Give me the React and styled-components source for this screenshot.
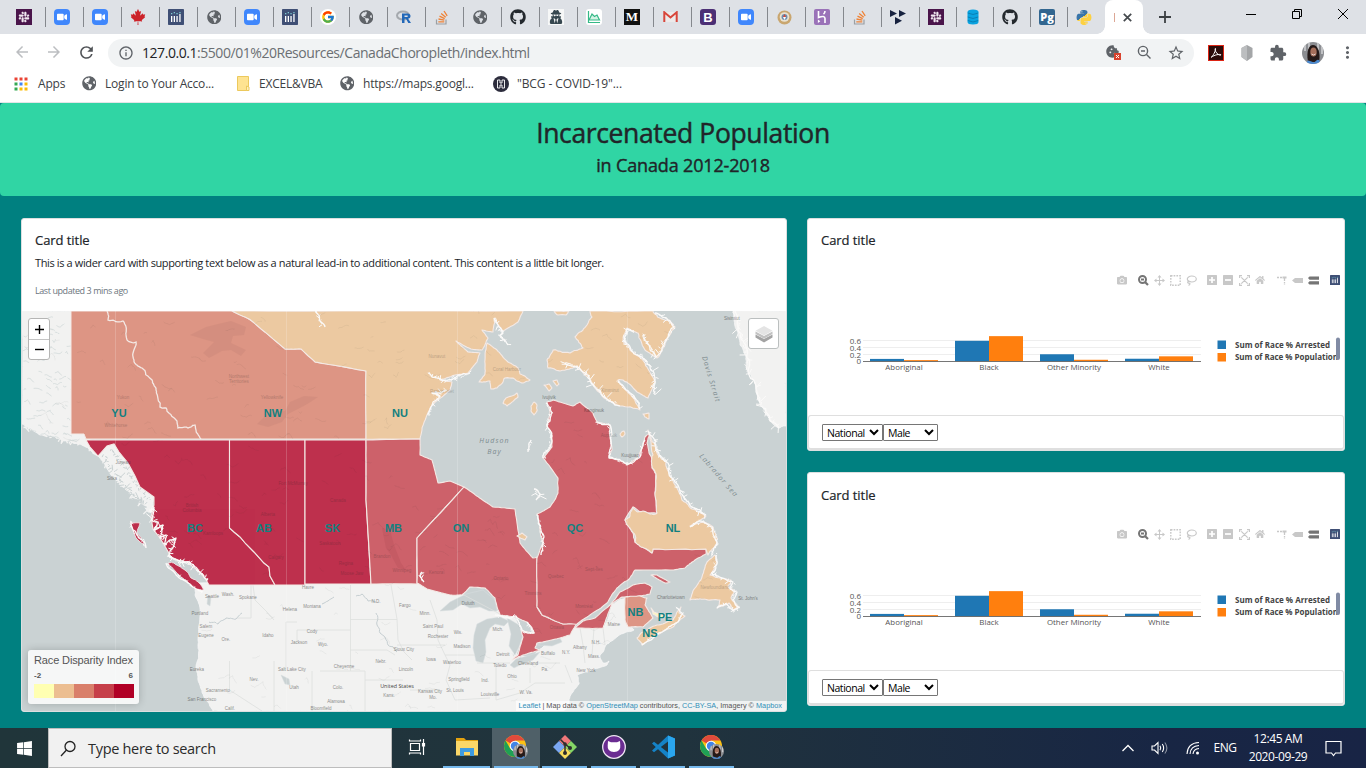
import React from "react";
import styled, { createGlobalStyle } from "styled-components";
import {
  FaSlack, FaGithub, FaCanadianMapleLeaf, FaGlobeAmericas, FaVideo,
  FaUserSecret, FaPython, FaWindows, FaHome, FaCamera,
} from "react-icons/fa";
import { FcGoogle } from "react-icons/fc";
import {
  MdArrowBack, MdArrowForward, MdRefresh, MdInfoOutline, MdStarBorder, MdMoreVert,
  MdExtension, MdCookie,
} from "react-icons/md";

const ui = `"Open Sans", "Noto Sans", sans-serif`;

const Global = createGlobalStyle`
  *, *::before, *::after { box-sizing: border-box; }
  html, body { margin: 0; padding: 0; }
  body { background: #008080; font-family: ${ui}; color: #212529; overflow: hidden; }
  svg { display: block; }
`;

const Screen = styled.div`
  width: 1366px;
  height: 768px;
  display: flex;
  flex-direction: column;
  overflow: hidden;
`;

/* ---------- browser chrome ---------- */

const TabStrip = styled.div`
  height: 34px;
  flex: none;
  display: flex;
  background: #dee1e6;
  padding-left: 8px;
`;

const Tab = styled.div`
  width: ${(p) => p.$w}px;
  height: 34px;
  flex: none;
  display: flex;
  align-items: center;
  padding-left: 8px;
  background: ${(p) => (p.$last ? "none" : "linear-gradient(#85888d, #85888d) right 7px / 1px 20px no-repeat")};
`;

const Favicon = styled.span`
  width: 16px;
  height: 16px;
  flex: none;
  display: flex;
  align-items: center;
  justify-content: center;
  overflow: hidden;
  border-radius: ${(p) => p.$r || 0}px;
  background: ${(p) => p.$bg || "transparent"};
  color: ${(p) => p.$fg || "#5f6368"};
  font: ${(p) => p.$font || `700 11px ${ui}`};
`;

const ActiveTab = styled.div`
  width: 38px;
  flex: none;
  display: flex;
  align-items: center;
  padding-left: 9px;
  gap: 8px;
  background: #fff;
  border-radius: 8px 8px 0 0;
  position: relative;
  &::before, &::after {
    content: "";
    position: absolute;
    bottom: 0;
    width: 8px;
    height: 8px;
  }
  &::before { left: -8px; background: radial-gradient(circle at 0 0, transparent 7.5px, #fff 8px); }
  &::after { right: -8px; background: radial-gradient(circle at 100% 0, transparent 7.5px, #fff 8px); }
`;

const FavSliver = styled.span`
  width: 1px;
  height: 9px;
  background: #dca795;
`;

const NewTab = styled.div`
  padding: 11px 0 0 16px;
`;

const WindowButtons = styled.div`
  margin-left: auto;
  display: flex;
  height: 28px;
  align-items: center;
  gap: 34px;
  padding-right: 17px;
`;

const Toolbar = styled.div`
  height: 35px;
  flex: none;
  display: flex;
  align-items: center;
  background: #fff;
  padding: 2px 12px 0 13px;
  color: #5f6368;
`;

const NavIcons = styled.div`
  display: flex;
  flex: none;
  gap: 14px;
  width: 95px;
  color: #bcbec1;
`;

const Omnibox = styled.div`
  width: 1086px;
  flex: none;
  height: 28px;
  border-radius: 14px;
  background: #f1f3f4;
  display: flex;
  align-items: center;
  padding: 0 9px 0 10px;
  gap: 8px;
`;

const Url = styled.span`
  font-size: 14px;
  letter-spacing: -0.45px;
  color: #6b6f73;
  flex: 1;
  line-height: 20px;
  b { font-weight: 400; color: #202124; }
`;

const OmniIcons = styled.div`
  display: flex;
  align-items: center;
  gap: 15px;
`;

const Extensions = styled.div`
  display: flex;
  align-items: center;
  flex: none;
  padding-left: 14px;
  gap: 14.5px;
`;

const Bookmarks = styled.div`
  height: 34px;
  flex: none;
  background: #fff;
  border-bottom: 1px solid #e3e5e8;
  display: flex;
  align-items: center;
  padding: 0 0 4px 14px;
`;

const Bookmark = styled.div`
  display: flex;
  align-items: center;
  width: ${(p) => p.$w}px;
  gap: ${(p) => p.$gap || 8}px;
  font-size: 12px;
  letter-spacing: ${(p) => p.$ls || -0.2}px;
  color: #3c4043;
  white-space: nowrap;
`;

/* ---------- page ---------- */

const Page = styled.main`
  flex: 1;
  background: #008080;
  overflow: hidden;
`;

const Jumbotron = styled.header`
  height: 93px;
  background: #30d5a4;
  border-radius: 4px;
  text-align: center;
  padding-top: 13px;
`;

const Heading = styled.h1`
  margin: 0;
  font-size: 26.5px;
  font-weight: 500;
  line-height: 34px;
  letter-spacing: -0.36px;
  -webkit-text-stroke: 0.45px currentColor;
`;

const SubHeading = styled.h2`
  margin: 0;
  font-size: 18px;
  font-weight: 500;
  line-height: 28px;
  letter-spacing: -0.15px;
  padding-top: 1px;
  -webkit-text-stroke: 0.4px currentColor;
`;

const Deck = styled.div`
  display: flex;
  align-items: flex-start;
  gap: 20px;
  padding: 22px 21px 0;
`;

const SideColumn = styled.div`
  display: flex;
  flex-direction: column;
  gap: 21px;
`;

const Card = styled.section`
  width: ${(p) => p.$w}px;
  height: ${(p) => p.$h}px;
  display: flex;
  flex-direction: column;
  background: #fff;
  border: 1px solid #dcdfe0;
  border-radius: 3px;
  overflow: hidden;
`;

const CardBody = styled.div`
  height: ${(p) => p.$h}px;
  flex: none;
  padding: ${(p) => p.$top || 12}px 13px 0;
`;

const CardTitle = styled.h5`
  margin: 0;
  font-size: 13px;
  font-weight: 500;
  line-height: 18px;
  letter-spacing: -0.06px;
  -webkit-text-stroke: 0.2px currentColor;
`;

const CardText = styled.p`
  margin: 0;
  font-size: 11px;
  line-height: 16px;
  padding-top: 6px;
  letter-spacing: -0.375px;
  white-space: nowrap;
`;

const Updated = styled.small`
  display: block;
  padding-top: 14px;
  font-size: 9px;
  line-height: 12px;
  color: #6c757d;
  letter-spacing: -0.43px;
`;

const CardFooter = styled.footer`
  height: 35px;
  margin-top: auto;
  flex: none;
  border: 1px solid #dfdfdf;
  border-radius: 3px;
  border-bottom-width: 2px;
  display: flex;
  align-items: center;
  padding: 1px 0 0 13px;
`;

const Select = styled.select`
  width: ${(p) => p.$w}px;
  height: 17px;
  padding: 0;
  margin: 0;
  border: 1px solid #767676;
  border-radius: 1px;
  background-color: #fff;
  color: #000;
  font: 10.5px ${ui};
  letter-spacing: -0.45px;
`;

/* ---------- map ---------- */

const MapPane = styled.div`
  position: relative;
  flex: 1;
  overflow: hidden;
  background: #cad2d3;
`;

const ZoomControl = styled.div`
  position: absolute;
  left: 6px;
  top: 7px;
  width: 22px;
  border: 1px solid #b5b5b4;
  border-radius: 3px;
  background: #fff;
`;

const ZoomButton = styled.div`
  height: 20px;
  display: flex;
  align-items: center;
  justify-content: center;
  & + & { border-top: 1px solid #c4c4c4; }
`;

const LayersControl = styled.div`
  position: absolute;
  left: 726px;
  top: 7px;
  width: 31px;
  height: 31px;
  border: 1px solid #bbbfbf;
  border-radius: 3px;
  background: #fff;
  display: flex;
  align-items: center;
  justify-content: center;
`;

const Legend = styled.div`
  position: absolute;
  left: 6px;
  bottom: 7px;
  width: 111px;
  height: 54px;
  padding: 4px 5px 0 6px;
  border-radius: 3px;
  background: rgba(255, 255, 255, 0.82);
  box-shadow: 0 0 8px rgba(0, 0, 0, 0.2);
  color: #555;
  font-family: "Liberation Sans", Arial, sans-serif;
`;

const LegendTitle = styled.div`
  font-size: 11px;
  line-height: 13px;
  white-space: nowrap;
  letter-spacing: -0.13px;
`;

const LegendRange = styled.div`
  display: flex;
  justify-content: space-between;
  font-size: 8px;
  font-weight: 700;
  line-height: 10px;
  padding: 4px 1px 0 0;
  height: 17px;
`;

const LegendBar = styled.div`
  display: flex;
`;

const Swatch = styled.span`
  height: 14px;
  flex: 1;
  background: ${(p) => p.$c};
`;

const Attribution = styled.div`
  position: absolute;
  right: 0;
  bottom: 0;
  height: 10px;
  padding: 0 4px 0 3px;
  background: rgba(255, 255, 255, 0.7);
  color: #555;
  font: 7.3px/10px "Liberation Sans", Arial, sans-serif;
  white-space: nowrap;
  a { color: #2f8fb8; }
`;

function generator(seed) {
  let s = seed;
  return () => {
    s = (s * 16807) % 2147483647;
    return s / 2147483647;
  };
}

/* deterministic midpoint displacement for coastlines */
function rough(pts, amp, seed = 7, closed = true) {
  const rnd = generator(seed * 7919);
  let list = pts;
  for (let d = 0, a = amp; d < 3; d++, a *= 0.62) {
    const out = [];
    for (let i = 0; i < list.length; i++) {
      const p = list[i];
      out.push(p);
      if (i === list.length - 1 && !closed) break;
      const q = list[(i + 1) % list.length];
      const len = Math.hypot(q[0] - p[0], q[1] - p[1]);
      if (len > 2.4) {
        const k = Math.min(a, len * 0.3);
        out.push([(p[0] + q[0]) / 2 + (rnd() - 0.5) * k, (p[1] + q[1]) / 2 + (rnd() - 0.5) * k]);
      }
    }
    list = out;
  }
  return "M" + list.map((p) => p[0].toFixed(1) + " " + p[1].toFixed(1)).join("L") + (closed ? "Z" : "");
}

/* short random inlets scattered along a shoreline */
function inlets(pts, reach, seed) {
  const rnd = generator(seed * 104729);
  let d = "";
  for (let i = 0; i < pts.length - 1; i++) {
    const [x0, y0] = pts[i];
    const [x1, y1] = pts[i + 1];
    const n = Math.ceil(Math.hypot(x1 - x0, y1 - y0) / 1.5);
    for (let k = 0; k < n; k++) {
      const x = x0 + ((x1 - x0) * k) / n + (rnd() - 0.5) * 2;
      const y = y0 + ((y1 - y0) * k) / n + (rnd() - 0.5) * 2;
      const r = reach * rnd();
      d += `M${x.toFixed(1)} ${y.toFixed(1)}l${((rnd() - 0.5) * 2 * r).toFixed(1)} ${((rnd() - 0.5) * 2 * r).toFixed(1)}`;
    }
  }
  return d;
}
const P = (str) => str.trim().split(/\s+/).map((c) => c.split(",").map(Number));

const C = { nw: "#dd9584", nu: "#ecc9a1", bc: "#be304d", qc: "#cd616a" };
const EDGE = "#f4e9e5";

const land = [
  "22,311 71,311 71,434 84,434 90,440 113,443 128,464 140,487 154,497 152,512 148,512 144,505 138,500 134,494 126,490 120,484 114,478 108,470 103,462 98,456 90,450 80,444 70,441 60,439 50,435 40,435 30,428 22,424",
  "196,583 417,583 430,588 450,595 462,595 500,612 515,618 523,634 516,655 530,658 545,645 575,628 604,628 612,604 628,597 628,627 634,630 618,636 606,645 600,655 603,663 609,661 607,665 590,671 577,675 579,684 573,692 568,705 563,711 213,711 204,697 198,680 196,668 199,650 198,640 200,612 195,595",
  "733,311 735,326 740,345 746,357 747,370 754,380 758,400 765,408 769,420 778,428 786,426 786,311",
];

const area = (pts, fill, amp, seed) => ({ pts: P(pts), fill, amp, seed });
const provinces = [
  area("232,311 247,318 253,322 285,349 301,349 315,362 333,365 366,371 366,439 420,439 422,428 427,415 432,405 442,397 450,390 452,382 440,380 455,375 468,373 477,362 480,353 468,352 456,341 471,349 482,350 488,338 482,330 493,332 495,320 503,331 508,328 518,322 523,311", C.nu, 0.7, 3),
  area("487,343 497,350 508,362 518,368 520,374 530,380 523,383 513,378 505,378 503,382 497,388 491,389 490,381 479,382 485,374 485,360", C.nu, 1.6, 5),
  area("506,398 517,393 518,397 507,406 503,403", C.nu, 1.4, 9),
  area("534,402 537,405 537,411 534,415 531,411 531,406", C.nu, 1, 11),
  area("544,385 549,384 552,388 549,391", C.nu, 1, 12),
  area("553,381 557,380 559,384 557,386", C.nu, 1, 13),
  area("554,311 569,311 566,315 558,315", C.nu, 1, 15),
  area("620,434 624,431 625,434 622,437", C.nu, 1, 17),
  area("643,414 649,413 649,419 645,417", C.nu, 1, 18),
  area("590,311 592,317 587,325 575,337 583,348 570,353 553,350 547,360 548,368 560,371 577,366 590,380 603,397 620,406 640,410 635,400 618,380 623,380 637,392 648,398 655,382 645,363 630,350 623,340 627,328 638,333 645,350 657,358 665,345 668,337 675,327 668,320 660,318 653,311", C.nu, 2.6, 21),
  area("366,440 420,439 420,455 432,460 438,483 450,481 464,487 417,538 417,584 371,584 366,500", C.qc, 0.35, 25),
  area("464,487 473,493 484,501 493,507 515,509 517,523 520,543 533,558 537,557 537,607 542,615 553,620 563,624 577,623 570,635 560,638 537,643 535,648 540,650 523,655 512,660 518,655 523,637 521,630 528,632 534,633 527,622 515,617 500,615 497,607 495,598 485,588 470,587 462,595 450,595 427,589 417,583 417,538", C.qc, 0.7, 27),
  area("547,402 553,400 573,406 580,402 593,413 597,422 610,425 610,437 612,450 609,458 620,460 627,465 638,458 642,448 645,437 650,433 647,443 649,453 653,462 652,468 656,474 655,493 657,513 643,513 633,507 625,520 633,533 635,542 652,553 653,549 706,549 706,554 695,560 685,568 670,570 635,570 628,580 617,588 607,603 590,615 577,624 563,624 553,620 542,615 537,607 537,558 543,543 540,530 537,514 550,507 558,493 558,478 543,458 552,447 552,433 547,427 550,413", C.qc, 1, 29),
  area("575,628 583,621 595,618 610,605 620,592 633,585 645,583 652,587 650,594 633,597 622,597 612,604 607,617 603,628", C.qc, 0.8, 31),
  area("651,575 657,575 670,582 665,583", C.qc, 0.8, 33),
  area("648,430 655,445 658,455 666,462 670,476 678,490 682,500 692,509 706,516 696,523 690,526 704,522 713,527 717,543 708,555 706,549 653,549 652,553 644,548 635,542 635,535 629,527 625,520 630,516 633,507 638,512 643,511 650,514 657,513 655,493 656,474 652,466 653,455", C.nu, 2.4, 35),
  area("715,555 717,563 710,575 720,578 731,580 728,586 735,591 731,598 738,606 733,610 729,603 717,608 720,600 703,599 690,600 695,588 702,577 707,562", C.nu, 1.8, 37),
  area("625,597 640,596 647,598 645,605 653,618 643,627 628,627 625,620", C.nw, 1, 39),
  area("681,607 679,613 685,616 678,622 673,627 657,635 650,638 642,645 637,638 643,632 657,625 665,623 673,620 677,612", C.nu, 1.4, 41),
  area("651,608 654,612 661,615 669,615 660,618 653,614", "#fbf8c0", 0.7, 43),
  area("517,536 522,533 527,537 525,540", C.nu, 0.8, 44),
];

const west = [
  "M86 440H229.500V528L234 532L240 537L246 544L254 552L264 563L269 567L270 576L275 585H209L205 578L196 569L187 562L178 560L171 557L166 548L160 538L153 529L151 517L154 505V497L140 487L135 476L128 463L119 452L114 444L107 446L98 456L90 447Z",
  "M229.500 440H305V585H275L270 576L269 567L264 563L254 552L246 544L240 537L234 532L229.500 528Z",
  "M305 440H366V500L371 584H305Z",
];

const yukon = "107,311 108,320 123,321 127,340 136,342 134,360 142,368 152,380 156,390 160,407 166,408 177,421 178,428 188,428 195,425 196,430 201,439";

const fiords = [
  ["150,512 154,508 152,520 158,522 154,530 163,525 160,538 166,535 165,545 176,538 171,550 168,556 180,562 192,564 200,572 208,580", 7, 51],
  ["131,521 133,530 138,536 142,540 146,548", 3, 53],
  ["166,563 175,573 188,583 203,592", 3, 57],
  ["648,431 656,446 660,456 668,463 672,478 680,491 686,500 694,508 706,515", 6.5, 59],
  ["690,527 697,522 704,522 712,527 717,543 712,555", 4, 61],
  ["565,363 577,367 585,373 590,380 596,388 603,396 612,402 620,406", 7.5, 63],
  ["618,381 626,390 635,398 640,409", 3.5, 65],
  ["655,395 654,386 655,378 650,366 642,357 631,350 624,341 627,329 634,331", 6.5, 67],
  ["643,335 649,345 656,357 662,348 668,337 674,327 668,320 655,313", 6, 69],
  ["428,373 437,378 446,381 455,378 470,373", 4, 71],
  ["428,415 433,402 440,396 432,393 447,390", 4, 73],
  ["494,318 498,325 503,333 500,336 508,345", 5, 75],
  ["316,311 319,316 321,322 325,327", 5, 77],
  ["534,489 540,494 536,500", 7, 79],
  ["531,440 529,446 528,452", 2, 81],
  ["538,515 541,530 543,543 541,555", 3.5, 83],
  ["422,572 420,576 424,582", 6, 85],
  ["495,615 510,618 516,616 522,630 528,633 534,633 527,622", 3, 87],
  ["716,555 717,564 712,574 722,578 733,582 729,588 737,592 733,600 739,607 733,611 726,604 717,608", 4, 89],
  ["677,608 683,614 678,622 668,628 656,635 642,645", 2, 91],
  ["735,311 738,330 746,347 748,372 756,388 760,403 770,420 779,428", 7, 93],
  ["546,403 552,413 547,426 552,436 549,449 543,458", 3.5, 95],
  ["597,422 610,425 611,440 609,457 627,464 640,457 645,440", 3, 97],
];

const panhandle = ["86,443 98,454 108,466 118,478 128,490 140,502 150,508", "112,450 122,462 132,478 142,492 152,500", "104,455 112,470 124,484 136,498 146,506"];

const waters = [
  "M440 611L450 602L466 594L483 590L495 600L497 611L489 611L480 607L470 608L462 604L453 610Z",
  "M477 624L487 619L500 617L509 621L504 626L495 624L490 628L485 640L486 652L483 663L476 661L473 648L474 635Z",
  "M507 618L519 625L523 635L519 647L515 655L509 646L511 634Z",
  "M510 665L516 659L527 656L540 652L533 660L522 664L514 668Z",
  "M536 645L548 641L560 638L562 642L552 646Z",
  "M208 595L211 597L210 606L207 604Z M281 675L289 679L290 685L285 684Z",
];

const rivers = [
  ["209,622 218,624 226,618 236,619 242,613", 2, 8], ["322,604 328,601 334,597", 3, 10],
  ["356,596 362,594 368,601 376,602", 3, 12], ["376,613 377,625 380,633 388,645 397,652", 4, 14],
];

const stateLines = [
  "M350.500 585V671M286 671V622H297M297 630V641M297 630H350.500M251 618V585M251 618H237M320 671H365M350.500 619.500H397M350.500 650H387L395 655M365 671V711M365 680H403",
  "M229.500 661V690L262 711M274 661V711M312 671V711M391 585L397 619L398 640L404 652L412 660M397 645H445M410 690H440M430 600L437 620L438 640L445 655L450 665L446 680L455 700",
  "M477 663H510M496 663V700M496 700L520 693L535 683H565M445 655L475 655M455 700L490 698M530 668V683M536 663H560M580 628L583 645L585 663M594 628L592 655M603 628L605 645M565 665L572 683M253 585L255 600L267 612L274 620M462 594L500 614",
];

const mapText = [
  [212, 598, "Seattle"], [228, 596, "Wash."], [248, 599, "Spokane"], [200, 615, "Portland"], [206, 628, "Salem"], [206, 637, "Eugene"],
  [226, 641, "Ore."], [268, 637, "Idaho"], [290, 611, "Helena"], [312, 608, "Montana"], [308, 589, "Havre"], [312, 633, "Cody"],
  [299, 644, "Jackson"], [323, 646, "Wyo."], [344, 668, "Cheyenne"], [292, 671, "Salt Lake City"], [197, 671, "Eureka"],
  [254, 681, "Nev."], [294, 689, "Utah"], [338, 689, "Colo."], [218, 692, "Sacramento"], [202, 701, "San Francisco"], [336, 703, "Alamosa"],
  [230, 710, "Calif."], [321, 710, "Bloomfield"], [376, 603, "N.D."], [381, 663, "Nebr."], [389, 697, "Kans."],
  [405, 607, "Fargo"], [425, 615, "Minn."], [433, 628, "Saint Paul"], [438, 638, "Rochester"], [458, 634, "Wis."], [462, 648, "Madison"],
  [468, 605, "Duluth"], [431, 661, "Iowa"], [404, 651, "Sioux City"], [406, 671, "Lincoln"], [452, 664, "Waterloo"], [459, 681, "Springfield"],
  [430, 693, "Kansas City"], [455, 692, "St. Louis"], [433, 699, "Mo."], [485, 682, "Ind."], [490, 696, "Louisville"], [503, 656, "Detroit"],
  [500, 667, "Toledo"], [528, 665, "Cleveland"], [498, 631, "Mich."], [512, 678, "Ohio"], [526, 694, "W. Va."], [545, 671, "Pa."],
  [548, 655, "Buffalo"], [566, 654, "N.Y."], [580, 649, "Albany"], [594, 658, "Mass."], [596, 644, "N.H."], [614, 626, "Maine"],
  [586, 672, "New York"], [671, 599, "Charlottetown"], [748, 600, "St. John's"], [549, 399, "Ivujivik"], [732, 320, "Sisimiut"],
  [123, 464, "Juneau"], [112, 480, "Sitka"], [594, 412, "Kangirsuk"], [630, 457, "Kuujjuaq"],
];

const provinceText = [
  [123, 399, "Yukon"], [116, 427, "Whitehorse"], [239, 378, "Northwest"], [239, 383, "Territories"], [272, 399, "Yellowknife"],
  [192, 507, "British"], [192, 512, "Columbia"], [213, 535, "Kamloops"], [268, 516, "Alberta"], [276, 559, "Calgary"],
  [293, 485, "Fort McMurray"], [338, 502, "Canada"], [330, 545, "Saskatoon"], [346, 565, "Regina"], [352, 575, "Moose Jaw"], [382, 558, "Brandon"],
  [533, 595, "Timmins"], [501, 580, "Ontario"], [556, 578, "Quebec"], [557, 629, "Ottawa"], [584, 608, "Montréal"], [594, 571, "Sept-Îles"],
  [437, 358, "Nunavut"], [507, 371, "Coral Harbour"], [442, 393, "Rankin Inlet"], [609, 437, "Aupaluk"], [715, 589, "Newfoundland"],
  [436, 574, "Kenora"], [402, 572, "Winnipeg"], [610, 392, "Kimmirut"],
];

const labels = [
  ["YU", 119, 417], ["NW", 273, 417], ["NU", 400, 417], ["BC", 195, 532], ["AB", 264, 532], ["SK", 332.5, 532], ["MB", 393.5, 532],
  ["ON", 461, 532], ["QC", 575, 532], ["NL", 673, 532], ["NB", 635.5, 616], ["PE", 665, 621], ["NS", 650, 637],
];

function terrain(count, reach, x0, y0, w0, h0, seed) {
  const r = generator(seed * 31337);
  const out = [];
  for (let i = 0; i < count; i++) {
    const x = x0 + r() * w0;
    const y = y0 + r() * h0;
    const w = reach * (0.3 + r());
    const pts = [[x, y], [x + w * 0.5, y + (r() - 0.5) * reach * 0.7], [x + w, y + (r() - 0.4) * reach]];
    out.push(rough(pts, 3, 100 + i, false));
  }
  return out.join("");
}

function ChoroplethMap() {
  return (
    <svg width="764" height="401" viewBox="22 311 764 401">
      <defs>
        <clipPath id="land">
          {land.map((l, i) => <path key={i} d={rough(P(l), 1.5, 200 + i)} />)}
          {provinces.map((p, i) => <path key={i} d={rough(p.pts, p.amp, p.seed)} />)}
          {west.map((d, i) => <path key={i} d={d} />)}
          <path d="M71 311H232L247 318L285 349L366 371V439H86L71 434Z" />
        </clipPath>
        <clipPath id="alaska"><path d={rough(P(land[0]), 1.5, 200)} /></clipPath>
      </defs>
      {land.map((l, i) => (
        <path key={i} d={rough(P(l), 2.2, 200 + i)} fill="#f2f2f1" stroke="#f8f8f7" strokeWidth="0.8" />
      ))}
      <g fill="none" stroke="#f3f3f2" strokeWidth="1.3">
        {panhandle.map((p, i) => <path key={i} d={inlets(P(p), 8, 5 + i)} />)}
      </g>
      <path d={inlets(P(panhandle[2]), 8, 21) + inlets(P(panhandle[1]), 5, 22) + inlets(P("122,488 130,492 138,500 147,508"), 7, 23)} fill="none" stroke="#cad2d3" />
      <path d={inlets(P("22,424 32,429 42,434 55,438 70,441 82,444"), 6, 31)} stroke="#f2f2f1" strokeWidth="1.4" />
      <g clipPath="url(#alaska)" fill="none" stroke="#d3dadb" strokeWidth="0.8">
        <path d={terrain(70, 7, 22, 318, 52, 122, 4)} />
      </g>
      {waters.map((d, i) => <path key={i} d={d} fill="#cad2d3" stroke="#d9dfe0" strokeWidth="0.5" />)}
      <g fill="none" stroke="#dddfde" strokeWidth="0.8">
        {stateLines.map((d, i) => <path key={i} d={d} />)}
      </g>
      <path d={rivers.map(([p, a, s]) => rough(P(p), a, s, false)).join("")} fill="none" stroke="#c5ced1" />
      <path d="M71 311H232L247 318L253 322L285 349H301L315 362L333 365L366 371V439H86L84 434H71Z" fill={C.nw} stroke={EDGE} />
      <path d={rough(P(yukon), 5, 15, false)} fill="none" stroke={EDGE} strokeWidth="1.3" />
      <path d="M190 335L206 327L218 324L231 321L246 327L244 335L233 336L231 343L246 350L241 356L231 350L222 351L209 358L203 353L214 342L203 339Z" fill="#cf8b7c" opacity="0.6" />
      <path d="M257 424L268 413L285 411L290 402L304 396L318 397L309 403L300 408L288 414L282 422L268 427Z" fill="#cf8b7c" opacity="0.6" />
      {west.map((d, i) => <path key={i} d={d} fill={C.bc} stroke={EDGE} strokeWidth="1.100" />)}
      {provinces.map((p, i) => (
        <path key={i} d={rough(p.pts, p.amp, p.seed)} fill={p.fill} stroke={EDGE} strokeWidth="1.100" strokeLinejoin="round" />
      ))}
      <path d="M382 528L390 530L394 545L401 563L406 570L398 568L391 555L386 548Z" fill="#bf5661" opacity="0.6" />
      <g fill={C.bc} stroke="#f8eeee" strokeWidth="0.8">
        <path d={rough(P("168,563 174,563 185,570 191,578 199,583 204,590 195,589 186,580 176,572"), 1.6, 14)} />
        <path d={rough(P("130,523 140,523 137,533 146,547 136,538"), 1.6, 16)} />
      </g>
      <g fill="none" stroke="#fbfaf9" strokeLinejoin="round">
        {fiords.map(([p, a, s]) => (
          <g key={s}>
            <path d={rough(P(p), a, s, false)} strokeWidth="1.300" />
            <path d={inlets(P(p), a, s)} />
          </g>
        ))}
      </g>
      <g clipPath="url(#land)" fill="none" stroke="#2b3c40" opacity="0.065" strokeWidth="0.8">
        <path d={terrain(420, 9, 24, 311, 700, 400, 9)} />
      </g>
      <path d="M115.500 311V711M286.500 311V711M457.500 311V711M627.500 311V711" stroke="#fff" opacity="0.18" />
      <g fontFamily="Liberation Sans, Arial, sans-serif" fontSize="4.500" fill="#222" textAnchor="middle">
        <g opacity="0.5">{mapText.map(([x, y, t]) => <text key={t} x={x} y={y}>{t}</text>)}</g>
        <g opacity="0.24">{provinceText.map(([x, y, t]) => <text key={t} x={x} y={y}>{t}</text>)}</g>
      </g>
      <g fontFamily="Open Sans, sans-serif" fontSize="7" fontStyle="italic" fill="#7d8b8f" textAnchor="middle" letterSpacing="1.100">
        <text x="494.500" y="443">Hudson</text>
        <text x="494.500" y="454">Bay</text>
        <text transform="translate(709 380) rotate(73)">Davis Strait</text>
        <text transform="translate(717 477) rotate(49)">Labrador Sea</text>
      </g>
      <text x="397" y="687.500" fontFamily="Open Sans, sans-serif" fontSize="5.400" fill="#444" textAnchor="middle">United States</text>
      <g fontFamily="Liberation Sans, Arial, sans-serif" fontSize="11" fontWeight="700" fill="#128080" textAnchor="middle">
        {labels.map(([t, x, y]) => <text key={t} x={x} y={y}>{t}</text>)}
      </g>
    </svg>
  );
}

/* ---------- bar chart ---------- */

const PlotArea = styled.div`
  flex: 1;
  display: flex;
  flex-direction: column;
  gap: ${(p) => p.$gap}px;
`;

const ModeBar = styled.div`
  display: flex;
  justify-content: flex-end;
  gap: 5.3px;
  height: 16px;
  margin-top: 13px;
  padding-right: 1px;
`;

const ModeGroup = styled.div`
  display: flex;
`;

const ModeButton = styled.span`
  width: 16px;
  height: 16px;
  display: flex;
  align-items: center;
  justify-content: center;
  color: ${(p) => (p.$on ? "#757575" : "#c8c8c8")};
`;

const modeIcons = {
  camera: <FaCamera size={10} />,
  zoom: <svg width="11" height="11" viewBox="0 0 11 11" fill="none" stroke="currentColor"><circle cx="4.500" cy="4.500" r="3.500" strokeWidth="2" /><path d="M7 7L10 10" strokeWidth="2.200" /><path d="M3 4.500h3" strokeWidth="2" /></svg>,
  pan: <svg width="11" height="11" viewBox="0 0 11 11" fill="currentColor"><path d="M5.500 0L7.500 2.500H6V5h2.500V3.500L11 5.500L8.500 7.500V6H6v2.500h1.500L5.500 11L3.500 8.500H5V6H2.500v1.500L0 5.500L2.500 3.500V5H5V2.500H3.500Z" /></svg>,
  box: <svg width="11" height="11" viewBox="0 0 11 11" fill="none" stroke="currentColor" strokeWidth="1.400" strokeDasharray="1.700 1.100"><rect x="0.800" y="0.800" width="9.400" height="9.400" /></svg>,
  lasso: <svg width="11" height="11" viewBox="0 0 11 11" fill="none" stroke="currentColor" strokeWidth="1.200"><ellipse cx="5.800" cy="4" rx="4.500" ry="3" /><path d="M3 6.300C1 6.500 1.500 8.500 3 8.200C4.500 8 4 10 2.500 10.300" /></svg>,
  plus: <svg width="10" height="10" viewBox="0 0 10 10"><rect width="10" height="10" rx="0.500" fill="currentColor" /><path d="M5 2V8M2 5H8" stroke="#fff" strokeWidth="1.700" /></svg>,
  minus: <svg width="10" height="10" viewBox="0 0 10 10"><rect width="10" height="10" rx="0.500" fill="currentColor" /><path d="M2 5H8" stroke="#fff" strokeWidth="1.700" /></svg>,
  auto: <svg width="11" height="11" viewBox="0 0 11 11" fill="none" stroke="currentColor" strokeWidth="1.200"><path d="M0.600 3V0.600H3M8 0.600h2.400V3M10.400 8v2.400H8M3 10.400H0.600V8M2.300 2.300L8.700 8.700M8.700 2.300L2.300 8.700" /></svg>,
  home: <FaHome size={10} />,
  spike: <svg width="11" height="11" viewBox="0 0 11 11" fill="none" stroke="currentColor" strokeWidth="1.300"><path d="M1 2.500H6" strokeDasharray="2 1" /><path d="M8.500 2V10" strokeDasharray="4 1 1.500 1" /><path d="M6.500 2.500h4" strokeWidth="2" /></svg>,
  closest: <svg width="11" height="11" viewBox="0 0 11 11" fill="currentColor"><path d="M0 5.500L3 3H11V8H3Z" /></svg>,
  compare: <svg width="11" height="11" viewBox="0 0 11 11" fill="currentColor"><path d="M0 3L1.500 1.500H11V4.800H1.500ZM0 8L1.500 6.300H11V9.600H1.500Z" /></svg>,
};

const PlotlyMark = ({ size = 16 }) => (
  <svg width={size} height={size} viewBox="0 0 16 16">
    <rect width="16" height="16" rx="0.800" fill="#3f4f75" />
    <g fill="#fff"><rect x="3" y="7" width="1.300" height="6" /><rect x="5.700" y="7" width="1.300" height="6" /><rect x="8.400" y="7" width="1.300" height="6" /><rect x="11.300" y="5" width="1.300" height="8" /></g>
    <g fill="#7bc8d0"><rect x="3" y="4" width="1.300" height="1.300" /><rect x="5.700" y="3" width="1.300" height="1.300" /><rect x="8.400" y="4" width="1.300" height="1.300" /><rect x="11.300" y="3" width="1.300" height="1.300" /></g>
  </svg>
);

const bars = [
  ["Aboriginal", 62, 0.075, 0.04], ["Black", 147, 0.6, 0.735], ["Other Minority", 232, 0.21, 0.05], ["White", 317, 0.08, 0.15],
];
const BASE = 72;
const UNIT = 34.5;

function RaceChart() {
  return (
    <svg width="536" height="110" viewBox="0 0 536 110" fontFamily="Open Sans, sans-serif">
      {[0.2, 0.4, 0.6].map((v) => <path key={v} d={`M55 ${Math.round(BASE - v * UNIT) + 0.5}H393`} stroke="#eee" />)}
      {bars.map(([name, x, a, b]) => (
        <g key={name}>
          <rect x={x} y={BASE + 0.5 - a * UNIT} width="34" height={a * UNIT} fill="#1f77b4" />
          <rect x={x + 34} y={BASE + 0.5 - b * UNIT} width="34" height={b * UNIT} fill="#ff7f0e" />
          <text x={x + 34} y="81" fontSize="7.900" fill="#555" textAnchor="middle">{name}</text>
        </g>
      ))}
      <path d="M55 72.500H393" stroke="#666" strokeWidth="0.900" />
      <g fontSize="8" fill="#555" textAnchor="end">
        <text x="53" y="55">0.6</text><text x="53" y="62">0.4</text><text x="53" y="69">0.2</text><text x="53" y="75">0</text>
      </g>
      <rect x="409.500" y="51.500" width="8.500" height="8.500" fill="#1f77b4" />
      <rect x="409.500" y="64" width="8.500" height="8.500" fill="#ff7f0e" />
      <g fontSize="8" fontWeight="700" fill="#444">
        <text x="427" y="59" textLength="95">Sum of Race % Arrested</text>
        <text x="427" y="71" textLength="103">Sum of Race % Population</text>
      </g>
      <rect x="528" y="48.500" width="4" height="22.500" rx="2" fill="#808BA4" />
    </svg>
  );
}

function ChartCard({ height, titleTop, plotGap }) {
  return (
    <Card $w={538} $h={height}>
      <CardBody $h={40} $top={titleTop}><CardTitle>Card title</CardTitle></CardBody>
      <PlotArea $gap={plotGap}>
        <ModeBar>
          <ModeGroup><ModeButton>{modeIcons.camera}</ModeButton></ModeGroup>
          <ModeGroup>
            <ModeButton $on>{modeIcons.zoom}</ModeButton>
            {["pan", "box", "lasso"].map((k) => <ModeButton key={k}>{modeIcons[k]}</ModeButton>)}
          </ModeGroup>
          <ModeGroup>{["plus", "minus", "auto", "home"].map((k) => <ModeButton key={k}>{modeIcons[k]}</ModeButton>)}</ModeGroup>
          <ModeGroup>
            {["spike", "closest"].map((k) => <ModeButton key={k}>{modeIcons[k]}</ModeButton>)}
            <ModeButton $on>{modeIcons.compare}</ModeButton>
          </ModeGroup>
          <ModeGroup><ModeButton><PlotlyMark size={10} /></ModeButton></ModeGroup>
        </ModeBar>
        <RaceChart />
      </PlotArea>
      <CardFooter>
        <Select $w={61} defaultValue="National"><option>National</option></Select>
        <Select $w={55} defaultValue="Male"><option>Male</option></Select>
      </CardFooter>
    </Card>
  );
}

/* ---------- taskbar ---------- */

const Taskbar = styled.footer`
  height: 40px;
  flex: none;
  display: flex;
  background: linear-gradient(90deg, #20353a 0, #20333d 50%, #182644 85%, #182445 100%);
`;

const StartButton = styled.div`
  width: 48px;
  display: flex;
  align-items: center;
  justify-content: center;
  color: #fff;
`;

const SearchBox = styled.div`
  width: 344px;
  display: flex;
  align-items: center;
  gap: 11px;
  padding-left: 11px;
  background: #f1f1f1;
  border: 1px solid #bdbdbd;
  color: #2b2b2b;
  font-size: 14.5px;
  letter-spacing: -0.3px;
`;

const TaskButton = styled.div`
  width: ${(p) => p.$w || 49}px;
  display: flex;
  align-items: center;
  justify-content: center;
  background: ${(p) => (p.$active ? "#4f6068" : "transparent")};
  border-bottom: 2px solid transparent;
  border-image: ${(p) => (p.$run ? "linear-gradient(90deg, transparent 4px, #76b9ed 4px, #76b9ed calc(100% - 4px), transparent calc(100% - 4px)) 2" : "none")};
`;

const Tray = styled.div`
  margin-left: auto;
  display: flex;
  align-items: center;
  color: #fff;
  padding-right: 15px;
  font-size: 12px;
  letter-spacing: -0.4px;
`;

const TrayItem = styled.div`
  width: ${(p) => p.$w}px;
  display: flex;
  justify-content: center;
  text-align: center;
  line-height: 18px;
`;

const Lang = styled(TrayItem)`
  letter-spacing: -0.5px;
`;

const Avatar = ({ size }) => (
  <svg width={size} height={size} viewBox="0 0 22 22">
    <defs><clipPath id="face"><circle cx="11" cy="11" r="11" /></clipPath></defs>
    <g clipPath="url(#face)">
      <rect width="22" height="22" fill="#8b8d91" />
      <path d="M3 0V9M7 0V7M16 0V8M20 2V12" stroke="#d3d5d7" strokeWidth="1.500" />
      <path d="M6 20C4 9 7 3 11 3S19 9 17 20Z" fill="#251a19" />
      <ellipse cx="11.500" cy="10" rx="3.200" ry="4.500" fill="#a56f5b" />
      <path d="M9.500 12Q11.500 14 13.500 12" stroke="#fff" fill="none" strokeWidth="0.700" />
      <path d="M4 22Q5 17 8 19L12 20.500L15 18Q18 17 18 22Z" fill="#4a89cf" />
    </g>
  </svg>
);

const ChromeMark = () => (
  <svg width="26" height="26" viewBox="0 0 26 26">
    <circle cx="12" cy="12" r="11" fill="#fbc116" />
    <path d="M12 12L2.500 6.500A11 11 0 0 1 21.500 6.500H12Z" fill="#e04a3c" />
    <path d="M2.500 6.500A11 11 0 0 0 12 23L16.800 14.500L12 12L7.200 14.700Z" fill="#1fa055" />
    <circle cx="12" cy="12" r="5.300" fill="#fff" /><circle cx="12" cy="12" r="4.200" fill="#4285e8" />
    <g transform="translate(10 10)"><Avatar size={15} /></g>
  </svg>
);

/* ---------- favicons ---------- */

const Zoom = <Favicon $bg="#4087fc" $r={4} $fg="#fff"><FaVideo size={10} /></Favicon>;
const Globe = <Favicon><FaGlobeAmericas size={14.5} /></Favicon>;
const Plotly = <Favicon><PlotlyMark /></Favicon>;
const SlackTile = <Favicon $bg="#4a154b" $fg="#f0e8f0"><FaSlack size={12} /></Favicon>;
const GitHub = <Favicon $fg="#24292e"><FaGithub size={16} /></Favicon>;
const Stack = (
  <Favicon>
    <svg width="14" height="15" viewBox="0 0 14 15" fill="none">
      <path d="M1.500 9.500V14H11V9.500" stroke="#9b9fa3" strokeWidth="1.200" />
      <path d="M3.300 11.800H9.300M3.500 9L9.300 10.200M4.500 6.200L9.700 8.700M6.200 3.500L10.700 7.200M9 1L12.200 5.800" stroke="#ef8236" strokeWidth="1.300" />
    </svg>
  </Favicon>
);
const favicons = [
  SlackTile, Zoom, Zoom,
  <Favicon $fg="#cc2229"><FaCanadianMapleLeaf size={16} /></Favicon>,
  Plotly, Globe, Zoom, Plotly,
  <Favicon $bg="#fff" $r={8}><FcGoogle size={14} /></Favicon>,
  Globe,
  <Favicon>
    <svg width="16" height="16" viewBox="0 0 16 16"><ellipse cx="7" cy="6.500" rx="6" ry="4" fill="none" stroke="#a5a9ae" strokeWidth="2" /><path d="M6 4.500H11.500Q14.500 4.500 14.500 7T12 9.500L15 14H12.300L10 9.800H8.500V14H6ZM8.500 6.500V8H11Q12 8 12 7.200T11 6.500Z" fill="#2268b8" fillRule="evenodd" /></svg>
  </Favicon>,
  Stack, Globe, GitHub,
  <Favicon $bg="#f6f7f7" $fg="#36474f"><FaUserSecret size={14} /></Favicon>,
  <Favicon $bg="#fff" $r={3}>
    <svg width="14" height="14" viewBox="0 0 14 14" fill="#d5f3e5" stroke="#35b987" strokeWidth="1.200"><path d="M1.500 1V12.500H13" fill="none" /><path d="M2 10L5 4L7.500 6.500L10 5L12.500 10Z" /></svg>
  </Favicon>,
  <Favicon $bg="#111" $fg="#fff" $font={`700 13px "Liberation Serif", serif`}>M</Favicon>,
  <Favicon>
    <svg width="15" height="12" viewBox="0 0 15 12"><path d="M1 11V1H14V11Z" fill="#eceaea" /><path d="M1.300 11V1.300L7.500 6.500L13.700 1.300V11" fill="none" stroke="#d8453a" strokeWidth="2" /></svg>
  </Favicon>,
  <Favicon $bg="#4c2f75" $r={3} $fg="#fff" $font={`700 13px "Liberation Sans", sans-serif`}>B</Favicon>,
  Zoom,
  <Favicon>
    <svg width="15" height="15" viewBox="0 0 15 15"><circle cx="7.500" cy="7.500" r="7" fill="#c9a66f" /><circle cx="7.500" cy="7" r="4.800" fill="#e9e2d2" /><circle cx="7.500" cy="7" r="3" fill="#6e8fb0" /><path d="M7.500 4L9 7H6Z" fill="#d44b38" /><path d="M7.500 10L9 7H6Z" fill="#fff" /></svg>
  </Favicon>,
  <Favicon $bg="#9a72b8" $r={2}>
    <svg width="10" height="12" viewBox="0 0 10 12" fill="none" stroke="#fff" strokeWidth="1.600"><path d="M1.500 0V6.500Q8 4 8 7.500V12M8 0Q8 2 6.500 3.200" /><path d="M0.900 8.500L3.300 10.200L0.900 12Z" fill="#fff" stroke="none" /></svg>
  </Favicon>,
  Stack,
  <Favicon>
    <svg width="16" height="16" viewBox="0 0 16 16" fill="#17223f"><path d="M0 1L7 4.500L0 8ZM9 1L16 4.500L9 8ZM5 8L12 11.800L5 15.500Z" /></svg>
  </Favicon>,
  SlackTile,
  <Favicon>
    <svg width="12" height="16" viewBox="0 0 12 16"><path d="M0.500 3Q0.500 0.500 6 0.500T11.500 3V13Q11.500 15.500 6 15.500T0.500 13Z" fill="#0aa3e0" /><path d="M0.800 4Q6 7 11.200 4M0.800 8Q6 11 11.200 8M0.800 11.500Q6 14.500 11.200 11.500" fill="none" stroke="#0877ab" strokeWidth="0.800" /></svg>
  </Favicon>,
  GitHub,
  <Favicon $bg="#326690" $r={2} $fg="#fff" $font={`800 11px/14px ${ui}`}>Pg</Favicon>,
  <Favicon>
    <svg width="0" height="0"><defs><linearGradient id="py" x1="0" y1="0" x2="0.700" y2="1"><stop offset="0.500" stopColor="#3a75a8" /><stop offset="0.500" stopColor="#fdd142" /></linearGradient></defs></svg>
    <FaPython size={17} fill="url(#py)" />
  </Favicon>,
];

export default function App() {
  return (
    <Screen>
      <Global />
      <TabStrip>
        {favicons.map((icon, i) => (
          <Tab key={i} $w={i < 24 ? 38 : 37} $last={i === 28}>{icon}</Tab>
        ))}
        <ActiveTab>
          <FavSliver />
          <svg width="9" height="9" viewBox="0 0 9 9" stroke="#45494d" strokeWidth="1.700"><path d="M0.800 0.800L8.200 8.200M8.200 0.800L0.800 8.200" /></svg>
        </ActiveTab>
        <NewTab><svg width="12" height="12" viewBox="0 0 12 12" stroke="#3c4043" strokeWidth="1.800"><path d="M6 0V12M0 6H12" /></svg></NewTab>
        <WindowButtons>
          <svg width="12" height="12" viewBox="0 0 12 12"><path d="M1 6.500H11" stroke="#000" /></svg>
          <svg width="12" height="12" viewBox="0 0 12 12" fill="none" stroke="#000"><path d="M1.500 3.500H8.500V10.500H1.500ZM3.500 3V1.500H10.500V8.500H9" /></svg>
          <svg width="12" height="12" viewBox="0 0 12 12" stroke="#000"><path d="M1 1L11 11M11 1L1 11" /></svg>
        </WindowButtons>
      </TabStrip>
      <Toolbar>
        <NavIcons>
          <MdArrowBack size={18} /><MdArrowForward size={18} />
          <MdRefresh size={19} color="#505357" />
        </NavIcons>
        <Omnibox>
          <MdInfoOutline size={16} />
          <Url><b>127.0.0.1</b>:5500/01%20Resources/CanadaChoropleth/index.html</Url>
          <OmniIcons>
            <svg width="17" height="17" viewBox="0 0 17 17">
              <MdCookie size={15} />
              <rect x="9" y="9" width="7" height="7" fill="#d9432f" /><path d="M11 11L14 14M14 11L11 14" stroke="#fff" />
            </svg>
            <svg width="15" height="15" viewBox="0 0 15 15" fill="none" stroke="currentColor" strokeWidth="1.400"><circle cx="6" cy="6" r="4.600" /><path d="M9.500 9.500L13.500 13.500M4 6H8" /></svg>
            <MdStarBorder size={18} />
          </OmniIcons>
        </Omnibox>
        <Extensions>
          <svg width="16" height="16" viewBox="0 0 16 16"><rect x="0.500" y="0.500" width="15" height="15" fill="#2b0b09" stroke="#dd2414" /><path d="M3 12.500C5 11 8 5.500 7.500 3.500C6.800 3 6.800 6 9 8.500C11 10.300 13 10.500 13 9.800C12 8.800 6 9.800 3.500 12.300" fill="none" stroke="#fff" /></svg>
          <svg width="16" height="16" viewBox="0 0 16 16"><path d="M8 0L13.500 3V12L8 16L2.500 12V3Z" fill="#a4a6a8" /><path d="M8 0V16L2.500 12V3Z" fill="#bcbec0" /></svg>
          <MdExtension size={18} />
          <Avatar size={22} />
          <MdMoreVert size={19} />
        </Extensions>
      </Toolbar>
      <Bookmarks>
        <Bookmark $w={67} $gap={10} $ls={0}>
          <svg width="14" height="14" viewBox="0 0 14 14">
            {["#ea4335", "#ea4335", "#ea4335", "#34a853", "#4285f4", "#fbbc05", "#34a853", "#fbbc05", "#fbbc05"].map((c, i) => (
              <rect key={i} x={0.5 + (i % 3) * 5} y={0.5 + Math.floor(i / 3) * 5} width="3" height="3" fill={c} />
            ))}
          </svg>
          Apps
        </Bookmark>
        <Bookmark $w={154}>{Globe}Login to Your Acco...</Bookmark>
        <Bookmark $w={104} $ls={-0.22}>
          <Favicon><svg width="13" height="15" viewBox="0 0 13 15"><path d="M0.500 0.500H11.500V14.500H0.500Z" fill="#fee391" stroke="#ecc95d" /><path d="M9.500 10V14.500H12V11Z" fill="#fff0bd" stroke="#ecc95d" /></svg></Favicon>
          EXCEL&amp;VBA
        </Bookmark>
        <Bookmark $w={154}>{Globe}https://maps.googl...</Bookmark>
        <Bookmark $w={150} $ls={-0.1}>
          <Favicon $bg="#2c2c3c" $r={8}><svg width="10" height="10" viewBox="0 0 10 10" fill="none" stroke="#fff" strokeWidth="0.900"><path d="M1.500 1H4V4H6V1H8.500V9H6V6H4V9H1.500Z" /></svg></Favicon>
          "BCG - COVID-19"...
        </Bookmark>
      </Bookmarks>

      <Page>
        <Jumbotron>
          <Heading>Incarcenated Population</Heading>
          <SubHeading>in Canada 2012-2018</SubHeading>
        </Jumbotron>
        <Deck>
          <Card $w={766} $h={494}>
            <CardBody $h={92}>
              <CardTitle>Card title</CardTitle>
              <CardText>This is a wider card with supporting text below as a natural lead-in to additional content. This content is a little bit longer.</CardText>
              <Updated>Last updated 3 mins ago</Updated>
            </CardBody>
            <MapPane>
              <ChoroplethMap />
              <ZoomControl>
                <ZoomButton><svg width="9" height="9" viewBox="0 0 9 9"><path d="M0 4.500H9M4.500 0V9" stroke="#000" strokeWidth="1.400" /></svg></ZoomButton>
                <ZoomButton><svg width="9" height="9" viewBox="0 0 9 9"><path d="M0 4.500H9" stroke="#000" strokeWidth="1.400" /></svg></ZoomButton>
              </ZoomControl>
              <LayersControl>
                <svg width="18" height="18" viewBox="0 0 18 18">
                  <path d="M0.500 9.500V12.500L9 17.500L17.500 12.500V9.500L9 14Z" fill="#a3a3a3" />
                  <path d="M0.500 6.500V9L9 13.800L17.500 9V6.500L9 11Z" fill="#c2c2c2" />
                  <path d="M9 1L17.500 5.800L9 10.600L0.500 5.800Z" fill="#e4e4e4" />
                </svg>
              </LayersControl>
              <Legend>
                <LegendTitle>Race Disparity Index</LegendTitle>
                <LegendRange><span>-2</span><span>6</span></LegendRange>
                <LegendBar>{["#ffffb2", "#ecbe91", "#d97f6b", "#c63f4a", "#b10026"].map((c) => <Swatch key={c} $c={c} />)}</LegendBar>
              </Legend>
              <Attribution>
                <a>Leaflet</a> | Map data © <a>OpenStreetMap</a> contributors, <a>CC-BY-SA</a>, Imagery © <a>Mapbox</a>
              </Attribution>
            </MapPane>
          </Card>
          <SideColumn>
            <ChartCard height={233} titleTop={12} plotGap={1} />
            <ChartCard height={234} titleTop={13} plotGap={2} />
          </SideColumn>
        </Deck>
      </Page>

      <Taskbar>
        <StartButton><FaWindows size={17} /></StartButton>
        <SearchBox>
          <svg width="17" height="17" viewBox="0 0 17 17" fill="none" stroke="#222" strokeWidth="1.300"><circle cx="10" cy="6.500" r="5" /><path d="M6.500 10L1 16" /></svg>
          Type here to search
        </SearchBox>
        <TaskButton $w={49}>
          <svg width="18" height="16" viewBox="0 0 18 16" fill="none" stroke="#fff" strokeWidth="1.200"><path d="M2.500 4.500H11.500V11.500H2.500ZM1.500 0.500V2H12.500V0.500M1.500 15.500V14H12.500V15.500M15.500 0V16" /><path d="M14.500 4.500H16.500V7H14.500Z" fill="#fff" /></svg>
        </TaskButton>
        <TaskButton $w={51} $run>
          <svg width="22" height="18" viewBox="0 0 22 18"><path d="M0 0H8L10 2H22V5H0Z" fill="#e3a20f" /><path d="M0 3H22V17.500H0Z" fill="#fbd768" /><path d="M4 18V10H18V18H14V14H8V18Z" fill="#3e9be0" /></svg>
        </TaskButton>
        <TaskButton $w={48} $active $run><ChromeMark /></TaskButton>
        <TaskButton $run>
          <svg width="24" height="24" viewBox="0 0 24 24">
            <path d="M12 0L18 6L12 12L6 6Z" fill="#f0787a" /><path d="M6 6L12 12L6 18L0 12Z" fill="#7aa7f2" /><path d="M18 6L24 12L18 18L12 12Z" fill="#85d566" /><path d="M12 12L18 18L12 24L6 18Z" fill="#f7dd5c" />
            <path d="M7.500 4.500L12 9V18M12 9L17 13" stroke="#2c2d2d" strokeWidth="1.500" fill="none" /><circle cx="12" cy="9" r="1.800" fill="#2c2d2d" /><circle cx="12" cy="18" r="2" fill="#2c2d2d" /><circle cx="17" cy="13" r="2" fill="#2c2d2d" />
          </svg>
        </TaskButton>
        <TaskButton $run>
          <svg width="24" height="24" viewBox="0 0 24 24"><circle cx="12" cy="12" r="11.300" fill="#6a2c91" stroke="#efe6f3" strokeWidth="1.300" /><path d="M6 6L9 7.300H15L18 6L18.300 10.500Q19 16.800 12 17Q5 16.800 5.700 10.500Z" fill="#fff" /></svg>
        </TaskButton>
        <TaskButton $run>
          <svg width="24" height="24" viewBox="0 0 24 24"><path d="M17 0.500L24 3.500V20.500L17 23.500L1 8.500L3 6.800L17 17.500Z" fill="#1583c7" /><path d="M17 0.500L1 15.500L3 17.200L17 6.500Z" fill="#1583c7" /><path d="M17 0.500L24 3.500V20.500L17 23.500Z" fill="#2aa6ee" /></svg>
        </TaskButton>
        <TaskButton $run><ChromeMark /></TaskButton>
        <Tray>
          <TrayItem $w={28}><svg width="12" height="8" viewBox="0 0 12 8" fill="none" stroke="#fff" strokeWidth="1.300"><path d="M0.500 7L6 1.500L11.500 7" /></svg></TrayItem>
          <TrayItem $w={35}>
            <svg width="17" height="14" viewBox="0 0 17 14" fill="none" stroke="#fff" strokeWidth="1.100"><path d="M1 5H3.500L7 1.500V12.500L3.500 9H1Z" /><path d="M9 4.800Q10.500 7 9 9.200M11.300 3Q14 7 11.300 11" /><path d="M13.800 1.500Q18 7 13.800 12.500" opacity="0.500" /></svg>
          </TrayItem>
          <TrayItem $w={32}>
            <svg width="14" height="14" viewBox="0 0 14 14" fill="none" stroke="#fff" strokeWidth="1.100"><path d="M1 13Q1.500 2 13 1.500M4 13Q4.500 5 13 4.500M7 13Q7.500 8 13 7.500" /><circle cx="11.500" cy="12" r="1.500" fill="#fff" stroke="none" /></svg>
          </TrayItem>
          <Lang $w={32}>ENG</Lang>
          <TrayItem $w={74}>12:45 AM<br />2020-09-29</TrayItem>
          <TrayItem $w={36}>
            <svg width="17" height="17" viewBox="0 0 17 17" fill="none" stroke="#fff" strokeWidth="1.200"><path d="M1 1.500H16V13H10.500L8.500 15.500L6.500 13H1Z" /></svg>
          </TrayItem>
        </Tray>
      </Taskbar>
    </Screen>
  );
}
